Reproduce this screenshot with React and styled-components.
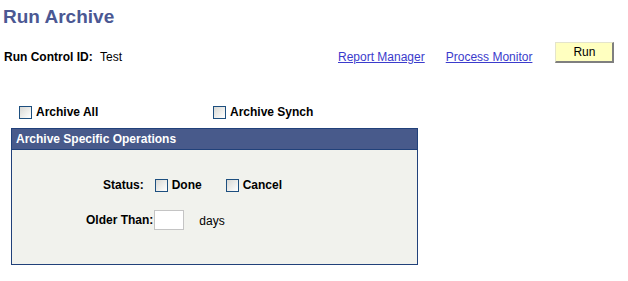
import styled, { createGlobalStyle } from "styled-components";

const GlobalStyle = createGlobalStyle`
  body {
    margin: 0;
    background: #ffffff;
    font-family: "Liberation Sans", Arial, sans-serif;
    font-size: 12px;
    color: #000000;
  }
`;

const App = () => {
  return (
    <Page>
      <GlobalStyle />
      <Title>Run Archive</Title>

      <ControlRow>
        <FieldLabel>Run Control ID:</FieldLabel>
        <FieldValue>Test</FieldValue>
        <NavLink href="#" $gap={0}>Report Manager</NavLink>
        <NavLink href="#" $gap={21}>Process Monitor</NavLink>
        <RunButton type="button">Run</RunButton>
      </ControlRow>

      <CheckRow>
        <CheckItem>
          <Check type="checkbox" />
          <CheckText>Archive All</CheckText>
        </CheckItem>
        <CheckItem>
          <Check type="checkbox" />
          <CheckText>Archive Synch</CheckText>
        </CheckItem>
      </CheckRow>

      <GroupBox>
        <GroupHeader>Archive Specific Operations</GroupHeader>
        <GroupBody>
          <StatusRow>
            <BoldLabel>Status:</BoldLabel>
            <CheckItem $left={11}>
              <Check type="checkbox" />
              <CheckText>Done</CheckText>
            </CheckItem>
            <CheckItem $left={24}>
              <Check type="checkbox" />
              <CheckText>Cancel</CheckText>
            </CheckItem>
          </StatusRow>
          <OlderRow>
            <BoldLabel>Older Than:</BoldLabel>
            <DaysInput type="text" />
            <Unit>days</Unit>
          </OlderRow>
        </GroupBody>
      </GroupBox>
    </Page>
  );
};

export default App;

const Page = styled.div`
  width: 628px;
  height: 281px;
  overflow: hidden;
`;

const Title = styled.h1`
  margin: 0;
  padding: 6px 0 0 3px;
  height: 22px;
  line-height: 22px;
  font-size: 19px;
  font-weight: bold;
  color: #4b5893;
`;

const ControlRow = styled.div`
  display: flex;
  align-items: flex-end;
  height: 22px;
  margin-top: 14px;
  padding-left: 4px;
`;

const FieldLabel = styled.span`
  width: 96px;
  line-height: 14px;
  font-weight: bold;
`;

const FieldValue = styled.span`
  width: 238px;
  line-height: 14px;
`;

const NavLink = styled.a`
  margin-left: ${(p) => p.$gap}px;
  line-height: 14px;
  color: #3b3bcc;
  text-decoration: underline;
`;

const RunButton = styled.button`
  align-self: flex-start;
  margin-left: 23px;
  width: 59px;
  height: 21px;
  padding: 0;
  background: #ffffc0;
  border-style: solid;
  border-width: 1px 2px 2px 1px;
  border-color: #e4e4cc #7f7f7f #7f7f7f #e4e4cc;
  font-family: "Liberation Sans", Arial, sans-serif;
  font-size: 12px;
  color: #000000;
`;

const CheckRow = styled.div`
  display: grid;
  grid-template-columns: 194px auto;
  align-items: center;
  height: 14px;
  margin-top: 41px;
  padding-left: 19px;
`;

const CheckItem = styled.label`
  display: flex;
  align-items: center;
  gap: 4px;
  margin-left: ${(p) => p.$left || 0}px;
`;

const Check = styled.input`
  appearance: none;
  margin: 0;
  width: 13px;
  height: 13px;
  border: 1px solid #1d4f7f;
  background: linear-gradient(135deg, #d8d8d4 0%, #f4f4f2 70%, #ffffff 100%);
`;

const CheckText = styled.span`
  line-height: 14px;
  font-weight: bold;
`;

const GroupBox = styled.section`
  width: 405px;
  margin: 9px 0 0 11px;
  border: 1px solid #21417a;
  background: #f1f2ed;
`;

const GroupHeader = styled.div`
  height: 20px;
  line-height: 20px;
  padding-left: 4px;
  background: #485a8b;
  border-bottom: 1px solid #21417a;
  color: #ffffff;
  font-weight: bold;
`;

const GroupBody = styled.div`
  height: 114px;
  padding-top: 28px;
  box-sizing: border-box;
`;

const StatusRow = styled.div`
  display: flex;
  align-items: center;
  height: 14px;
  padding-left: 91px;
`;

const OlderRow = styled.div`
  display: flex;
  align-items: center;
  height: 20px;
  margin-top: 18px;
  padding-left: 74px;
`;

const BoldLabel = styled.span`
  line-height: 14px;
  font-weight: bold;
`;

const DaysInput = styled.input`
  margin: 0 0 0 1px;
  width: 30px;
  height: 20px;
  box-sizing: border-box;
  border: 1px solid #c4c4c4;
  background: #ffffff;
  padding: 0 2px;
`;

const Unit = styled.span`
  margin-left: 15px;
  line-height: 14px;
  margin-top: 2px;
`;
